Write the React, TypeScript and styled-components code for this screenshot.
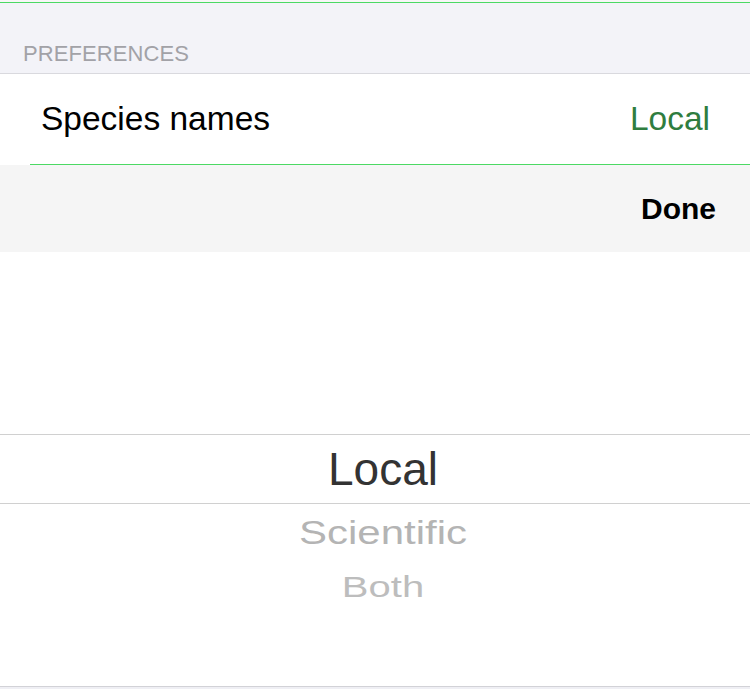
import React from "react";
import styled, { createGlobalStyle } from "styled-components";

const GlobalStyle = createGlobalStyle`
  html, body {
    margin: 0;
    padding: 0;
    background: #efeff4;
    font-family: "Liberation Sans", Arial, sans-serif;
  }
`;

const Screen = styled.div`
  width: 750px;
  height: 689px;
  display: flex;
  flex-direction: column;
  overflow: hidden;
  background: #efeff4;
`;

const TopEdge = styled.div`
  height: 2px;
  background: #f7f7f7;
  border-bottom: 1px solid #4cd964;
`;

const SectionHeader = styled.div`
  height: 71px;
  box-sizing: border-box;
  background: #f3f3f8;
  border-bottom: 1px solid #d9d9de;
  display: flex;
  align-items: flex-end;
  padding: 0 0 6px 23px;
  font-size: 22px;
  letter-spacing: 0.1px;
  color: #a2a2a7;
  text-transform: uppercase;
`;

const Row = styled.div`
  height: 90px;
  background: #ffffff;
  display: flex;
  align-items: center;
  justify-content: space-between;
  padding: 0 40px 0 41px;
  font-size: 33.5px;
`;

const Label = styled.span`
  color: #000000;
`;

const Value = styled.span`
  color: #2f7d3f;
`;

const Separator = styled.div`
  height: 1px;
  background: linear-gradient(to right, #ffffff 30px, #4cd964 30px);
`;

const Toolbar = styled.div`
  height: 87px;
  background: #f5f5f5;
  display: flex;
  align-items: center;
  justify-content: flex-end;
  padding-right: 34px;
`;

const DoneButton = styled.button`
  border: none;
  background: none;
  padding: 0;
  font-family: inherit;
  font-size: 30px;
  font-weight: 700;
  color: #000000;
`;

const Picker = styled.div`
  height: 434px;
  background: #ffffff;
  border-bottom: 1px solid #d2d2d7;
  display: flex;
  flex-direction: column;
`;

const PickerSpacer = styled.div`
  height: 182px;
`;

const Selection = styled.div`
  height: 68px;
  border-top: 1px solid #d0d0d0;
  border-bottom: 1px solid #d0d0d0;
  display: flex;
  align-items: center;
  justify-content: center;
  padding-left: 16px;
  font-size: 46px;
  color: #333333;
`;

const Option = styled.div<{ $size: number; $squash: number; $h: number; $color: string }>`
  height: ${(p) => p.$h}px;
  display: flex;
  align-items: center;
  justify-content: center;
  padding-left: 16px;
  font-size: ${(p) => p.$size}px;
  color: ${(p) => p.$color};
  transform: scaleY(${(p) => p.$squash});
`;

export default function App() {
  return (
    <>
      <GlobalStyle />
      <Screen>
        <TopEdge />
        <SectionHeader>Preferences</SectionHeader>
        <Row>
          <Label>Species names</Label>
          <Value>Local</Value>
        </Row>
        <Separator />
        <Toolbar>
          <DoneButton>Done</DoneButton>
        </Toolbar>
        <Picker>
          <PickerSpacer />
          <Selection>Local</Selection>
          <Option $size={42} $squash={0.8} $h={58} $color="#b4b4b4">
            Scientific
          </Option>
          <Option $size={40} $squash={0.72} $h={50} $color="#bdbdbd">
            Both
          </Option>
        </Picker>
      </Screen>
    </>
  );
}
